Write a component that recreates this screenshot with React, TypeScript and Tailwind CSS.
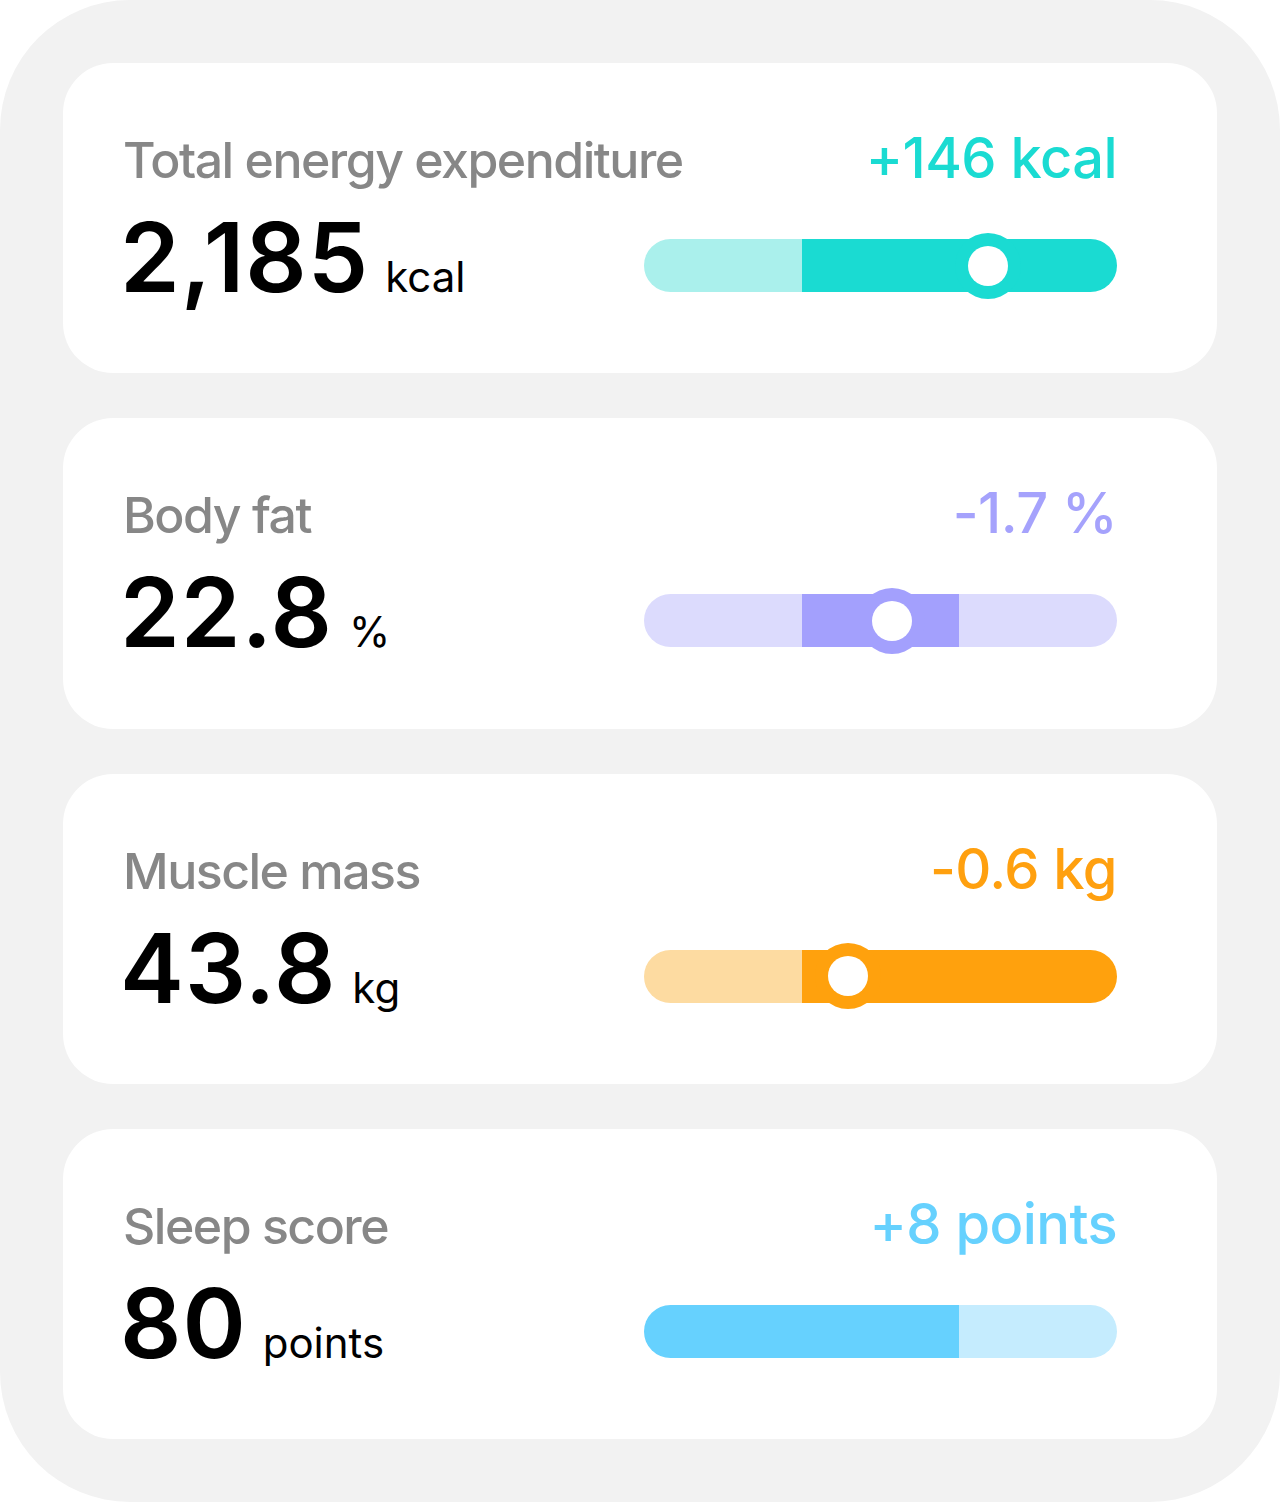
import React from 'react';

type Metric = {
  label: string;
  value: string;
  unit: string;
  delta: string;
  deltaColor: string;
  segments: { width: string; color: string }[];
  knob?: number;
  knobColor?: string;
};

const metrics: Metric[] = [
  {
    label: 'Total energy expenditure',
    value: '2,185',
    unit: 'kcal',
    delta: '+146 kcal',
    deltaColor: 'text-[#1adbd2]',
    segments: [
      { width: 'w-1/3', color: 'bg-[#aaf0ec]' },
      { width: 'w-2/3', color: 'bg-[#1adbd2]' },
    ],
    knob: 72.7,
    knobColor: 'bg-[#1adbd2]',
  },
  {
    label: 'Body fat',
    value: '22.8',
    unit: '%',
    delta: '-1.7 %',
    deltaColor: 'text-[#a5a2fc]',
    segments: [
      { width: 'w-1/3', color: 'bg-[#dcdbfd]' },
      { width: 'w-1/3', color: 'bg-[#a3a0fd]' },
      { width: 'w-1/3', color: 'bg-[#dcdbfd]' },
    ],
    knob: 52.4,
    knobColor: 'bg-[#a3a0fd]',
  },
  {
    label: 'Muscle mass',
    value: '43.8',
    unit: 'kg',
    delta: '-0.6 kg',
    deltaColor: 'text-[#ffa00f]',
    segments: [
      { width: 'w-1/3', color: 'bg-[#fddba1]' },
      { width: 'w-2/3', color: 'bg-[#ffa10d]' },
    ],
    knob: 43.1,
    knobColor: 'bg-[#ffa10d]',
  },
  {
    label: 'Sleep score',
    value: '80',
    unit: 'points',
    delta: '+8 points',
    deltaColor: 'text-[#66d1fe]',
    segments: [
      { width: 'w-2/3', color: 'bg-[#66d1fe]' },
      { width: 'w-1/3', color: 'bg-[#c5ecfe]' },
    ],
  },
];

function MetricCard({ m }: { m: Metric }) {
  return (
    <div className="flex-1 rounded-[50px] bg-white pl-[60px] pr-[100px] pt-[67px] flex flex-col">
      {/* Label + delta */}
      <div className="flex items-baseline justify-between">
        <span className="text-[50px] leading-none font-medium text-[#878787] tracking-[-0.03em]">{m.label}</span>
        <span className={`text-[56px] leading-none font-medium tracking-[-0.01em] ${m.deltaColor}`}>{m.delta}</span>
      </div>

      {/* Value + bar */}
      <div className="mt-[23px] flex items-end justify-between">
        <div className="flex items-baseline gap-[16px] -ml-[3px]">
          <span className="text-[96px] leading-none font-semibold text-black tracking-[0.01em]">{m.value}</span>
          <span className="text-[42px] leading-none font-normal text-black">{m.unit}</span>
        </div>
        <div className="relative mb-[13px] w-[473px] h-[53px]">
          <div className="flex h-full w-full overflow-hidden rounded-full">
            {m.segments.map((s, i) => (
              <div key={i} className={`h-full ${s.width} ${s.color}`} />
            ))}
          </div>
          {m.knob !== undefined && (
            <div
              className={`absolute top-1/2 w-[66px] h-[66px] -translate-x-1/2 -translate-y-1/2 rounded-full flex items-center justify-center ${m.knobColor}`}
              style={{ left: `${m.knob}%` }}
            >
              <div className="w-[40px] h-[40px] rounded-full bg-white" />
            </div>
          )}
        </div>
      </div>
    </div>
  );
}

export default function App() {
  return (
    <div className="w-[1280px] h-[1502px] bg-white" style={{ fontFamily: 'Inter, "Noto Sans", sans-serif' }}>
      <div className="h-full rounded-[130px] bg-[#f2f2f2] p-[63px] flex flex-col gap-[45px]">
        {metrics.map((m) => (
          <MetricCard key={m.label} m={m} />
        ))}
      </div>
    </div>
  );
}
